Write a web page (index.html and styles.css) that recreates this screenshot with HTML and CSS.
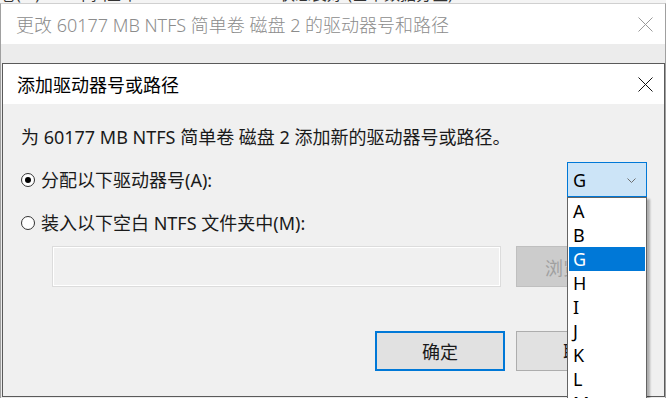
FILE: index.html
```html
<!DOCTYPE html>
<html lang="zh-CN">
<head>
<meta charset="utf-8">
<title>添加驱动器号或路径</title>
<link rel="stylesheet" href="styles.css">
</head>
<body>
<div class="desktop">
  <div class="behind">
    <span class="frag f1">卷(C:)</span>
    <span class="frag f2">简单</span>
    <span class="frag f3">基本</span>
    <span class="frag f4">NTFS</span>
    <span class="frag f5">状态良好 (基本数据分区)</span>
  </div>

  <div class="win-back">
    <div class="back-title">
      <span class="back-title-text">更改 60177 MB NTFS 简单卷 磁盘 2 的驱动器号和路径</span>
      <svg class="close-x dim" width="15" height="15" viewBox="0 0 15 15"><path d="M0.5 0.5 L14.5 14.5 M14.5 0.5 L0.5 14.5" stroke="currentColor" stroke-width="1" fill="none"/></svg>
    </div>
    <div class="back-body"></div>
  </div>

  <div class="dlg">
    <div class="dlg-title">
      <span class="dlg-title-text">添加驱动器号或路径</span>
      <svg class="close-x" width="15" height="15" viewBox="0 0 15 15"><path d="M0.5 0.5 L14.5 14.5 M14.5 0.5 L0.5 14.5" stroke="currentColor" stroke-width="1" fill="none"/></svg>
    </div>
    <div class="dlg-body">
      <p class="intro">为 60177 MB NTFS 简单卷 磁盘 2 添加新的驱动器号或路径。</p>
      <div class="row row1">
        <label class="opt"><span class="radio checked"></span>分配以下驱动器号(A):</label>
        <div class="combo">
          <span class="combo-val">G</span>
          <svg class="chev" width="9" height="5" viewBox="0 0 9 5"><path d="M0.5 0.5 L4.5 4.5 L8.5 0.5" stroke="#6e6e6e" stroke-width="1" fill="none"/></svg>
        </div>
      </div>
      <div class="row row2">
        <label class="opt"><span class="radio"></span>装入以下空白 NTFS 文件夹中(M):</label>
      </div>
      <div class="row row3">
        <div class="path"></div>
        <button class="btn btn-disabled">浏览(B)...</button>
      </div>
      <div class="row row4">
        <button class="btn btn-default">确定</button>
        <button class="btn">取消</button>
      </div>
    </div>

    <ul class="list">
      <li>A</li>
      <li>B</li>
      <li class="sel">G</li>
      <li>H</li>
      <li>I</li>
      <li>J</li>
      <li>K</li>
      <li>L</li>
      <li>M</li>
    </ul>
  </div>
</div>
</body>
</html>
```

FILE: styles.css
```css
* { box-sizing: border-box; }
html, body { margin: 0; padding: 0; }
body {
  font-family: "Noto Sans", "Noto Sans CJK SC", sans-serif;
  color: #1a1a1a;
  background: #a8a8a8;
}
.desktop {
  position: relative;
  width: 666px;
  height: 398px;
  overflow: hidden;
  background: #a8a8a8;
}

/* fragments of a window further behind */
.behind {
  position: absolute;
  left: 0; top: 0;
  width: 666px; height: 4px;
  overflow: hidden;
  background: #f4f4f4;
}
.frag {
  position: absolute;
  top: -16px;
  font-size: 16px;
  line-height: 20px;
  color: #333;
  white-space: nowrap;
}
.f1 { left: 0; }
.f2 { left: 81px; }
.f3 { left: 106px; }
.f4 { left: 174px; }
.f5 { left: 279px; }

/* back window */
.win-back {
  position: absolute;
  left: 0; top: 3px;
  width: 666px; height: 400px;
  border-left: 1px solid #a0a0a0;
  border-right: 1px solid #a0a0a0;
  border-top: 1px solid #d0d0d0;
  display: flex;
  flex-direction: column;
}
.back-title {
  height: 40px;
  background: #fff;
  display: flex;
  align-items: center;
  justify-content: space-between;
  padding: 0 12px 0 15px;
}
.back-title-text {
  font-size: 18px;
  color: #8c8c8c;
  font-weight: 300;
  white-space: nowrap;
}
.close-x { display: block; color: #111; }
.close-x.dim { color: #9a9a9a; }
.back-body {
  flex: 1;
  background: #ececec;
}

/* front dialog */
.dlg {
  position: absolute;
  left: 2px; top: 63px;
  width: 663px; height: 334px;
  border: 1px solid #5a5a5a;
  background: #f0f0f0;
  display: flex;
  flex-direction: column;
}
.dlg-title {
  height: 40px;
  background: #fff;
  display: flex;
  align-items: center;
  justify-content: space-between;
  padding: 0 11px 0 14px;
  flex-shrink: 0;
}
.dlg-title-text {
  font-size: 18px;
  color: #000;
  white-space: nowrap;
}
.dlg-body {
  padding: 0 17px 0 18px;
  display: flex;
  flex-direction: column;
}
.intro {
  margin: 21px 0 0;
  font-size: 18px;
  line-height: 24px;
  white-space: nowrap;
}
.row { display: flex; align-items: center; }
.row1 { margin-top: 13px; height: 35px; justify-content: space-between; }
.row2 { margin-top: 14px; height: 24px; }
.row3 { margin-top: 11px; height: 41px; padding-left: 31px; gap: 15px; }
.row4 { margin-top: 44px; height: 40px; justify-content: flex-end; gap: 11px; padding-right: 1px; }

.opt {
  display: flex;
  align-items: center;
  gap: 6px;
  font-size: 18px;
  line-height: 24px;
  white-space: nowrap;
}
.radio {
  width: 14px; height: 14px;
  border: 1px solid #333;
  border-radius: 50%;
  background: #fff;
  display: flex;
  align-items: center;
  justify-content: center;
  flex-shrink: 0;
}
.radio.checked::after {
  content: "";
  width: 6px; height: 6px;
  border-radius: 50%;
  background: #000;
}

.combo {
  width: 80px; height: 35px;
  background: #cce4f7;
  border: 1px solid #0078d7;
  display: flex;
  align-items: center;
  justify-content: space-between;
  padding: 0 10px 0 5px;
}
.combo-val { font-size: 18px; line-height: 24px; color: #000; }
.chev { display: block; margin-top: 1px; }

.path {
  width: 449px; height: 41px;
  background: #f0f0f0;
  border: 1px solid #dcdcdc;
  box-shadow: inset 0 0 0 1px #fff;
}
.btn {
  width: 130px; height: 40px;
  font-family: inherit;
  font-size: 18px;
  color: #1a1a1a;
  background: #e1e1e1;
  border: 1px solid #adadad;
  padding: 0;
  white-space: nowrap;
}
.btn-disabled {
  width: 131px; height: 41px;
  background: #cccccc;
  border-color: #bfbfbf;
  color: #a0a0a0;
}
.btn-default {
  border: 2px solid #0078d7;
}

/* open dropdown list */
.list {
  position: absolute;
  left: 564px; top: 133px;
  width: 80px;
  margin: 0;
  padding: 1px 1px 0;
  list-style: none;
  background: #fff;
  border: 1px solid #646464;
  box-shadow: 3px 2px 2px rgba(0,0,0,0.28);
}
.list li {
  height: 24px;
  line-height: 24px;
  font-size: 18px;
  padding-left: 4px;
  color: #000;
}
.list li.sel {
  background: #0078d7;
  color: #fff;
}
```
